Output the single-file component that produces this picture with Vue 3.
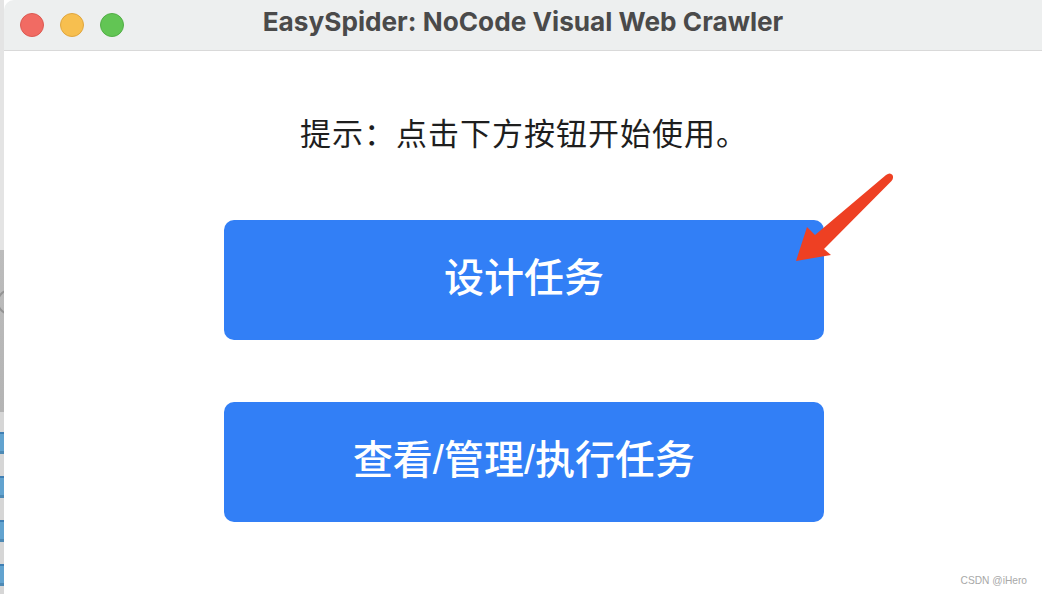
<script setup>
const buttons = ['设计任务', '查看/管理/执行任务']
const lights = ['red', 'yellow', 'green']
const tabs = [0, 1, 2, 3]
</script>

<template>
  <div class="page">
    <div class="backdrop">
      <div class="scroll-chevron"></div>
      <div class="tabs">
        <div v-for="t in tabs" :key="t" class="tab"></div>
      </div>
    </div>
    <div class="window">
      <header class="titlebar">
        <div class="lights">
          <span v-for="l in lights" :key="l" class="light" :class="l"></span>
        </div>
        <div class="title">EasySpider: NoCode Visual Web Crawler</div>
      </header>
      <main class="content">
        <p class="hint">提示：点击下方按钮开始使用。</p>
        <button v-for="b in buttons" :key="b" class="action">{{ b }}</button>
      </main>
    </div>
    <svg class="arrow" width="110" height="100" viewBox="790 170 110 100">
      <path d="M796 261 807 227 815 235 886 175Q890 172 892.500 175 894 178 891.500 181 L824 249 831 255Z" fill="#ee4023" />
    </svg>
    <span class="watermark">CSDN @iHero</span>
  </div>
</template>

<style scoped>
.page {
  position: relative;
  width: 1042px;
  height: 594px;
  overflow: hidden;
  background: #fff;
  display: flex;
  font-family: "Noto Sans CJK SC", "Liberation Sans", sans-serif;
}
.backdrop {
  width: 4px;
  flex: none;
  background: linear-gradient(#e4e4e4 0, #e4e4e4 250px, #bcbcbc 250px, #b4b4b4 412px, #d6d6d6 412px);
  position: relative;
  overflow: hidden;
}
.scroll-chevron {
  position: absolute;
  top: 289px;
  left: -3px;
  width: 26px;
  height: 26px;
  border: 2px solid #949494;
  border-radius: 50%;
  box-sizing: border-box;
}
.tabs {
  padding-top: 432px;
  display: flex;
  flex-direction: column;
  gap: 22px;
}
.tab {
  height: 22px;
  background: linear-gradient(#3f7fb4 0, #3f7fb4 2px, #62a3cf 2px, #62a3cf 19px, #4e8ab5 19px);
}
.window {
  flex: 1;
  display: flex;
  flex-direction: column;
  min-width: 0;
  background: #fff;
}
.titlebar {
  height: 51px;
  box-sizing: border-box;
  flex: none;
  display: flex;
  align-items: center;
  position: relative;
  background: #edefef;
  border-bottom: 1px solid #d9d9d9;
  border-top-left-radius: 10px;
}
.lights {
  display: flex;
  gap: 16px;
  padding-left: 16px;
}
.light {
  width: 24px;
  height: 24px;
  border-radius: 50%;
  box-sizing: border-box;
  border: 1px solid;
}
.red { background: #f16b63; border-color: #dc5a52; }
.yellow { background: #f7bf4f; border-color: #e0a63e; }
.green { background: #62c554; border-color: #52ae46; }
.title {
  position: absolute;
  left: 0;
  right: 0;
  top: 0;
  text-align: center;
  font: 700 26.200px/43px "Inter", "Liberation Sans", sans-serif;
  color: #4a4a4a;
}
.content {
  flex: 1;
  display: flex;
  flex-direction: column;
  align-items: center;
  padding-left: 2px;
}
.hint {
  margin: 59px 0 0;
  height: 44px;
  line-height: 44px;
  font-size: 31px;
  letter-spacing: 1px;
  color: #1e1e1e;
}
.action {
  width: 600px;
  height: 120px;
  flex: none;
  margin-top: 62px;
  padding: 0 0 11px;
  border: 0;
  border-radius: 10px;
  background: #327ff6;
  color: #fff;
  font-family: "Liberation Sans", "Noto Sans CJK SC", sans-serif;
  font-size: 40px;
  font-weight: 500;
}
.hint + .action {
  margin-top: 66px;
}
.arrow {
  position: absolute;
  left: 790px;
  top: 170px;
}
.watermark {
  position: absolute;
  right: 15px;
  bottom: 8px;
  font: 10.200px "Liberation Sans", sans-serif;
  color: #a8a8a8;
}
</style>
